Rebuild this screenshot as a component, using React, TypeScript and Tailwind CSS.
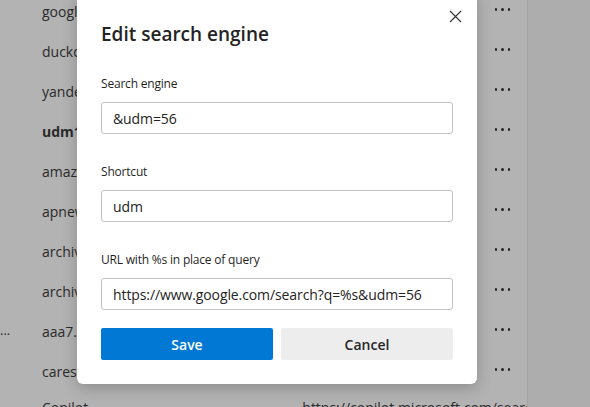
import React from "react";

const rows = [
  { name: "google", bold: false },
  { name: "duckduckgo", bold: false },
  { name: "yandex", bold: false },
  { name: "udm14", bold: true },
  { name: "amazon", bold: false },
  { name: "apnews", bold: false },
  { name: "archive", bold: false },
  { name: "archive2", bold: false },
  { name: "aaa7.com", bold: false, left: "..." },
  { name: "carestream", bold: false },
];

function Dots() {
  return (
    <div className="flex gap-[4px] items-center -mt-[3px]">
      <span className="w-[2.5px] h-[2.5px] rounded-full bg-[#222]" />
      <span className="w-[2.5px] h-[2.5px] rounded-full bg-[#222]" />
      <span className="w-[2.5px] h-[2.5px] rounded-full bg-[#222]" />
    </div>
  );
}

function Field({ label, value }: { label: string; value: string }) {
  return (
    <div className="flex flex-col">
      <div className="text-[12px] tracking-[-0.2px] leading-[18px] text-[#1f1f1f] h-[18px]">{label}</div>
      <div className="mt-[9px] h-[32px] w-[352px] border border-[#c2c2c2] rounded-[3px] flex items-center pl-[11px] text-[14px] tracking-[-0.1px] text-[#242424] bg-white">
        {value}
      </div>
    </div>
  );
}

export default function App() {
  return (
    <div
      className="relative w-[590px] h-[407px] overflow-hidden bg-[#b3b3b3] flex"
      style={{ fontFamily: '"Segoe UI", "Open Sans", "Noto Sans", sans-serif' }}
    >
      <div className="w-[527px] h-full flex flex-col -mt-[9px]">
        {rows.map((r, i) => (
          <div key={i} className="h-[40px] flex items-center relative shrink-0">
            {r.left ? (
              <span className="absolute left-[0px] text-[13px] text-[#2a2a2a]">{r.left}</span>
            ) : null}
            <span
              className={
                "ml-[42px] text-[14px] text-[#2a2a2a] " + (r.bold ? "font-bold" : "")
              }
            >
              {r.name}
            </span>
            <div className="ml-auto mr-[17px]">
              <Dots />
            </div>
          </div>
        ))}
        <div className="h-[40px] -mt-[4px] flex items-center shrink-0 text-[14px] text-[#2a2a2a]">
          <span className="ml-[42px]">Copilot</span>
          <span className="ml-[214px]">https://copilot.microsoft.com/search</span>
        </div>
      </div>
      <div className="flex-1 h-full bg-[#adadad] border-l border-[#a6a6a6]" />

      <div className="absolute left-[77px] top-[-10px] w-[400px] h-[394px] bg-white rounded-[6px] shadow-[0_4px_16px_rgba(0,0,0,0.22)] pt-[30px] px-[24px]">
        <button className="absolute right-[14px] top-[18px] w-[16px] h-[16px] flex items-center justify-center">
          <svg width="13" height="13" viewBox="0 0 13 13">
            <path d="M1 1 L12 12 M12 1 L1 12" stroke="#333" strokeWidth="1.1" />
          </svg>
        </button>
        <div className="text-[19px] leading-[28px] font-semibold text-[#242424]">
          Edit search engine
        </div>
        <div className="mt-[27px] flex flex-col gap-[29px]">
          <Field label="Search engine" value="&udm=56" />
          <Field label="Shortcut" value="udm" />
          <Field label="URL with %s in place of query" value="https://www.google.com/search?q=%s&udm=56" />
        </div>
        <div className="mt-[18px] flex gap-[8px]">
          <button className="w-[172px] h-[32px] bg-[#0078d4] text-white text-[14px] font-semibold rounded-[2px]">
            Save
          </button>
          <button className="w-[172px] h-[32px] bg-[#ededed] text-[#262626] text-[14px] font-semibold rounded-[2px]">
            Cancel
          </button>
        </div>
      </div>
    </div>
  );
}
